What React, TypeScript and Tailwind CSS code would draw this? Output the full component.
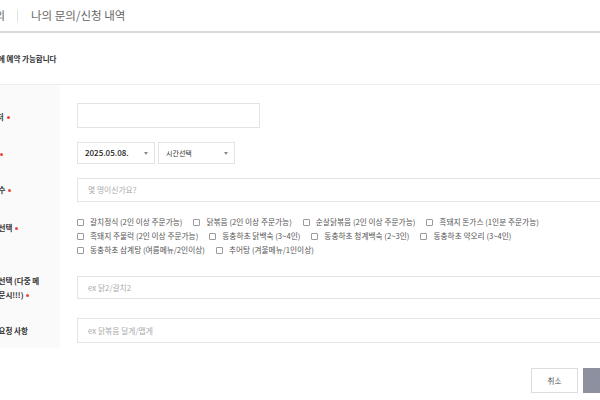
import React from "react";

const Dot = () => (
  <span className="inline-block ml-[3px] w-[3px] h-[3px] rounded-full bg-[#e8453c] align-middle" />
);

const Caret = () => (
  <span className="w-0 h-0 border-l-[2.5px] border-r-[2.5px] border-t-[3px] border-l-transparent border-r-transparent border-t-[#8a8a8a]" />
);

const Check = ({ label }: { label: string }) => (
  <div className="flex items-center h-[14px] mr-[11px] whitespace-nowrap">
    <span className="w-[7px] h-[7px] border border-[#9a9a9a] rounded-[1px] mr-[6px] bg-white" />
    <span>{label}</span>
  </div>
);

const Row = ({
  label,
  labelPt,
  contentCls,
  children,
}: {
  label: React.ReactNode;
  labelPt: string;
  contentCls: string;
  children: React.ReactNode;
}) => (
  <div className="flex">
    <div className={`w-[100px] shrink-0 bg-[#fafafa] pl-[23px] pr-[19px] ${labelPt}`}>
      <div className="text-[7.5px] leading-[14px] font-bold text-[#333]">{label}</div>
    </div>
    <div className={`flex-1 pl-[17px] pr-[20px] ${contentCls}`}>{children}</div>
  </div>
);

export default function App() {
  return (
    <div className="w-[600px] h-[400px] overflow-hidden bg-white font-['Noto_Sans_CJK_KR','Noto_Sans',sans-serif]">
      <div className="w-[680px] -ml-[40px]">
        <div className="h-[33px] flex items-center border-b-2 border-[#dadada] text-[11.5px] text-[#666]">
          <span className="w-[45px] text-right whitespace-nowrap">예약 문의</span>
          <span className="ml-[12px] mr-[13px] w-px h-[12px] bg-[#e2e2e2]" />
          <span>나의 문의/신청 내역</span>
        </div>
        <div className="h-[51px] flex items-center text-[7.5px] font-semibold text-[#333]">
          <span className="w-[96px] text-right whitespace-nowrap">방문 하루 전에 예약 가능합니다</span>
        </div>
        <div className="border-t border-[#eeeeee]">
          <Row label={<>연락처<Dot /></>} labelPt="pt-[25px]" contentCls="pt-[18px] pb-[7px]">
            <div className="w-[183px] h-[25px] border border-[#e3e3e3] bg-white" />
          </Row>
          <Row label={<>날짜<Dot /></>} labelPt="pt-[12px]" contentCls="pt-[7px] pb-[7px]">
            <div className="flex gap-[3px]">
              <div className="w-[78px] h-[22px] border border-[#e3e3e3] flex items-center justify-between pl-[7px] pr-[6px] text-[8px] font-medium text-[#222]">
                <span>2025.05.08.</span>
                <Caret />
              </div>
              <div className="w-[77px] h-[22px] border border-[#e3e3e3] flex items-center justify-between pl-[7px] pr-[6px] text-[7px] text-[#333]">
                <span>시간선택</span>
                <Caret />
              </div>
            </div>
          </Row>
          <Row label={<>인원 수<Dot /></>} labelPt="pt-[12px]" contentCls="pt-[7px] pb-[6px]">
            <div className="h-[24px] border border-[#e3e3e3] flex items-center pl-[10px] text-[7.8px] text-[#aaa]">
              몇 명이신가요?
            </div>
          </Row>
          <Row label={<>메뉴 선택<Dot /></>} labelPt="pt-[13px]" contentCls="pt-[7px] pb-[9px]">
            <div className="flex flex-wrap text-[7.7px] text-[#555]">
              <Check label="갈치정식 (2인 이상 주문가능)" />
              <Check label="닭볶음 (2인 이상 주문가능)" />
              <Check label="순살닭볶음 (2인 이상 주문가능)" />
              <Check label="흑돼지 돈가스 (1인분 주문가능)" />
              <Check label="흑돼지 주물럭 (2인 이상 주문가능)" />
              <Check label="동충하초 닭백숙 (3~4인)" />
              <Check label="동충하초 청계백숙 (2~3인)" />
              <Check label="동충하초 약오리 (3~4인)" />
              <Check label="동충하초 삼계탕 (여름메뉴/2인이상)" />
              <Check label="추어탕 (겨울메뉴/1인이상)" />
            </div>
          </Row>
          <Row
            label={<>수량 선택 (다중 메뉴 주문시!!!)<Dot /></>}
            labelPt="pt-[8px]"
            contentCls="pt-[10px] pb-[9px]"
          >
            <div className="h-[23px] border border-[#e3e3e3] flex items-center pl-[10px] text-[7.8px] text-[#aaa]">
              ex 닭2/갈치2
            </div>
          </Row>
          <Row label={<>기타 요청 사항</>} labelPt="pt-[16px]" contentCls="pt-[10px] pb-[5px]">
            <div className="h-[25px] border border-[#e3e3e3] flex items-center pl-[10px] text-[7.8px] text-[#aaa]">
              ex 닭볶음 달게/맵게
            </div>
          </Row>
        </div>
        <div className="mt-[20px] flex justify-end gap-[5px] pr-[10px]">
          <div className="w-[47px] h-[25px] border border-[#dddddd] flex items-center justify-center text-[7.5px] text-[#555]">
            취소
          </div>
          <div className="w-[47px] h-[25px] bg-[#8c909f] flex items-center justify-center text-[7.5px] text-white">
            등록
          </div>
        </div>
      </div>
    </div>
  );
}
